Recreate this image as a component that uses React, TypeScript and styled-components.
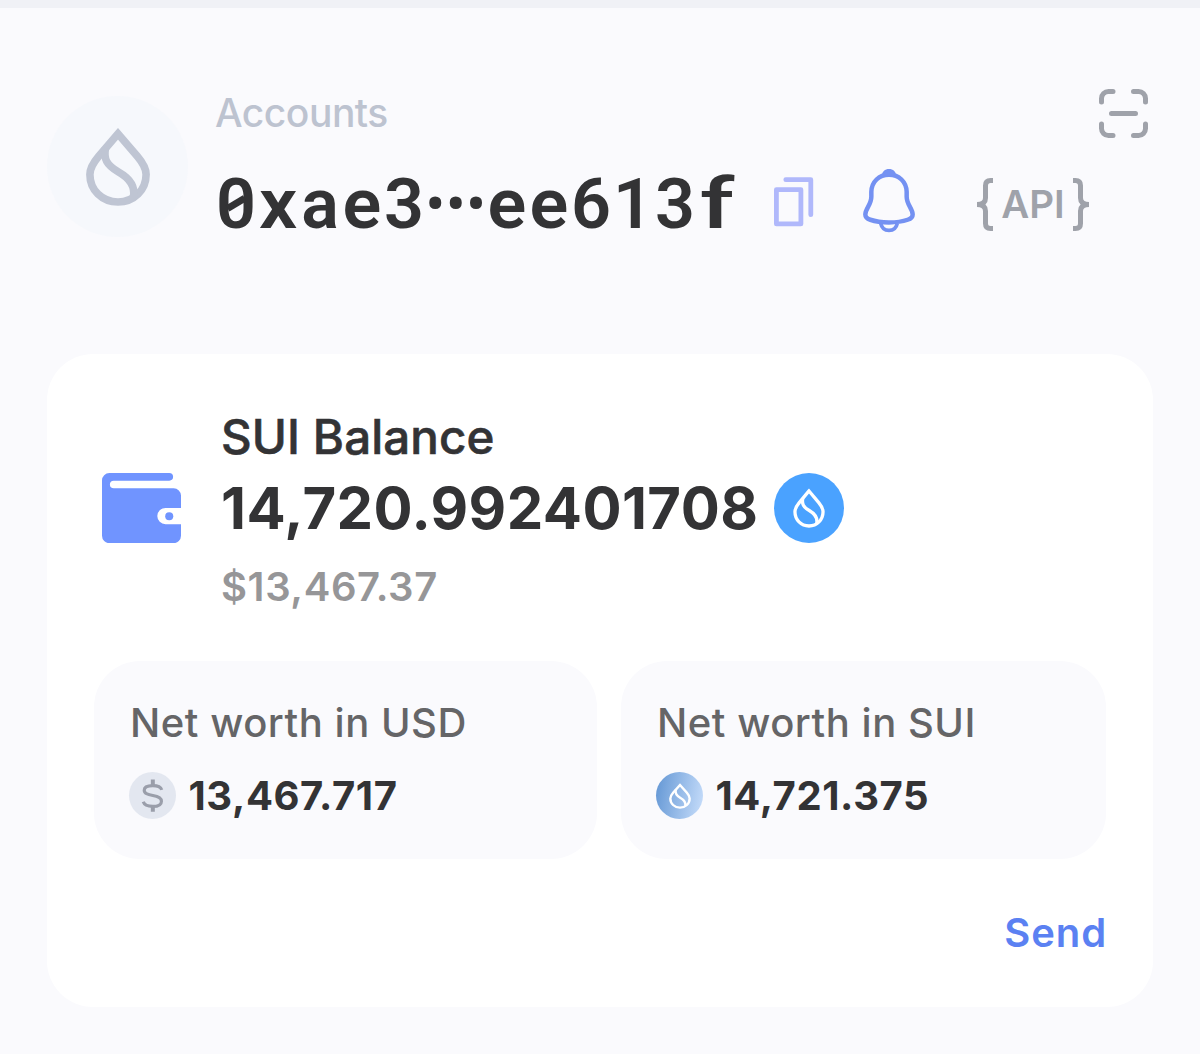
import React from "react";
import styled, { createGlobalStyle, ThemeProvider } from "styled-components";

const theme = {
  colors: {
    background: "#fafafd",
    strip: "#f0f1f6",
    card: "#ffffff",
    text: "#333335",
    label: "#656567",
    muted: "#969698",
    faded: "#bdc3d0",
    icon: "#9fa2aa",
    cta: "#5b81f2",
  },
};

const GlobalStyle = createGlobalStyle`
  * {
    box-sizing: border-box;
  }
  body {
    margin: 0;
    background: ${theme.colors.background};
    font-family: Inter, "Liberation Sans", sans-serif;
    font-optical-sizing: none;
    color: ${theme.colors.text};
  }
  svg {
    display: block;
    flex-shrink: 0;
  }
`;

const Page = styled.div`
  width: 1200px;
  height: 1054px;
  overflow: hidden;
  border-top: 8px solid ${({ theme }) => theme.colors.strip};
`;

const Header = styled.header`
  display: flex;
  height: 346px;
  padding: 80px 51px 0 47px;
`;

const Avatar = styled.div`
  width: 141px;
  height: 141px;
  margin-top: 8px;
  border-radius: 50%;
  background: #f6f8fc;
  display: flex;
  align-items: center;
  justify-content: center;
  flex-shrink: 0;
`;

const HeaderBody = styled.div`
  flex-grow: 1;
  margin-left: 27px;
`;

const HeaderTop = styled.div`
  display: flex;
  justify-content: space-between;
  height: 51px;
`;

const HeaderLabel = styled.span`
  font-size: 39px;
  font-weight: 500;
  line-height: 50px;
  letter-spacing: -0.5px;
  color: ${({ theme }) => theme.colors.faded};
`;

const AddressRow = styled.div`
  display: flex;
  align-items: center;
  height: 80px;
  margin-top: 25px;
`;

const Address = styled.h1`
  margin: 0;
  width: 523px;
  font-family: Roboto, sans-serif;
  font-size: 70px;
  font-weight: 600;
  line-height: 80px;
  white-space: nowrap;
  display: flex;
`;

const Glyph = styled.span<{ $stretch?: number; $weight?: number }>`
  display: inline-block;
  width: 42.2px;
  text-align: center;
  font-weight: ${({ $weight }) => $weight ?? 600};
  transform: scaleX(${({ $stretch }) => $stretch ?? 1});
`;

const SlashedZero = styled(Glyph)`
  position: relative;
  &::after {
    content: "";
    position: absolute;
    left: 11px;
    top: 36px;
    width: 20px;
    height: 6.5px;
    background: currentColor;
    transform: rotate(-31deg);
  }
`;

const Dot = styled.span`
  display: flex;
  justify-content: center;
  width: 20.4px;
  font-size: 53px;
`;

const HeaderIcons = styled.div`
  display: flex;
  align-items: center;
  margin-left: 36px;
`;

const CopyWrapper = styled.div`
  margin-top: -4px;
`;

const BellWrapper = styled.div`
  margin: -6px 0 0 49px;
`;

const ApiTag = styled.div`
  display: flex;
  align-items: center;
  justify-content: space-between;
  width: 112px;
  margin-left: 62px;
  font-size: 38.5px;
  font-weight: 600;
  line-height: 54px;
  color: ${({ theme }) => theme.colors.icon};
`;

const Card = styled.main`
  width: 1106px;
  height: 653px;
  margin-left: 47px;
  padding: 57.5px 47px 0;
  border-radius: 46px;
  background: ${({ theme }) => theme.colors.card};
`;

const Summary = styled.section`
  display: flex;
  align-items: center;
  height: 193px;
  padding-left: 8px;
`;

const SummaryText = styled.div`
  margin-left: 40px;
  padding-top: 7px;
`;

const SummaryTitle = styled.h2`
  margin: 0;
  font-size: 47.5px;
  font-weight: 500;
  line-height: 50px;
  letter-spacing: 0.1px;
  -webkit-text-stroke: 0.6px currentColor;
`;

const Balance = styled.div`
  display: flex;
  align-items: center;
  gap: 15.5px;
  height: 92px;
  font-size: 58px;
  font-weight: 700;
  letter-spacing: 0.43px;
`;

const Fiat = styled.div`
  font-size: 40px;
  font-weight: 600;
  line-height: 51px;
  letter-spacing: 0.6px;
  margin-top: 7px;
  color: ${({ theme }) => theme.colors.muted};
`;

const Tiles = styled.section`
  display: grid;
  grid-template-columns: 503px 485px;
  gap: 24px;
  margin-top: 56.5px;
`;

const Tile = styled.div`
  height: 198px;
  padding: 38px 35px 0;
  border-radius: 46px;
  background: ${({ theme }) => theme.colors.background};
`;

const TileLabel = styled.div`
  font-size: 40px;
  font-weight: 500;
  line-height: 48px;
  letter-spacing: 0.53px;
  text-indent: 1px;
  color: ${({ theme }) => theme.colors.label};
`;

const TileValue = styled.div`
  display: flex;
  align-items: center;
  gap: 12.5px;
  margin-top: 24px;
  font-size: 40px;
  font-weight: 700;
  line-height: 49px;
  letter-spacing: 0.6px;
`;

const Coin = styled.span<{ $size: number; $background: string }>`
  width: ${({ $size }) => $size}px;
  height: ${({ $size }) => $size}px;
  border-radius: 50%;
  background: ${({ $background }) => $background};
  display: flex;
  align-items: center;
  justify-content: center;
`;

const SendButton = styled.button`
  display: block;
  margin: 49px -1px 0 auto;
  padding: 0;
  border: 0;
  background: none;
  font-family: inherit;
  font-size: 40px;
  font-weight: 600;
  line-height: 50px;
  letter-spacing: 0.9px;
  color: ${({ theme }) => theme.colors.cta};
  cursor: pointer;
`;

interface DropProps {
  width: number;
  height: number;
  stroke: number;
  color: string;
}

function Drop({ width, height, stroke, color }: DropProps) {
  return (
    <svg width={width} height={height} viewBox="0 0 64 78" preserveAspectRatio="none" fill="none" stroke={color} strokeWidth={stroke}>
      <path d="M32 5.8 12.5 28.5C7 35 3.9 40 3.9 46.5 3.9 62 16 74 32 74s28.1-12 28.1-27.5C60.1 40 57 35 51.5 28.5Z" />
      <path d="M19.5 20C17.5 31 20.5 37 32.5 44 44 50.5 49.5 58 47.5 69" />
    </svg>
  );
}

function ScanIcon() {
  return (
    <svg width="51" height="51" viewBox="0 0 51 51" fill="none" stroke={theme.colors.icon} strokeWidth="5" strokeLinecap="round">
      <path d="M3.5 14V10.5a7 7 0 0 1 7-7H15M35.5 3.5H40.5a7 7 0 0 1 7 7V14M47.5 36V40.5a7 7 0 0 1-7 7H35.5M15 47.5H10.5a7 7 0 0 1-7-7V36M13.5 25.5h24" />
    </svg>
  );
}

function CopyIcon() {
  return (
    <svg width="40" height="50" viewBox="0 0 40 50" fill="none" stroke="#b0b8fb" strokeWidth="4.8" strokeLinejoin="round">
      <rect x="2.4" y="12.7" width="24.5" height="34.2" />
      <path d="M11.8 2.7h25v35" strokeLinecap="round" />
    </svg>
  );
}

function BellIcon() {
  return (
    <svg width="52" height="63.5" viewBox="0 0 156 190" fill="none" stroke="#7491f2" strokeWidth="13.5">
      <path d="M78 17C48 17 26 38 25 68V83C25 107 7 119 7 136 7 146 13 149 22 152 39 158 58 160 78 160S117 158 134 152C143 149 149 146 149 136 149 119 131 107 131 83V68C130 38 108 17 78 17Z" />
      <path d="M53 163C56 177 65 184 78 184S100 177 103 163" strokeWidth="11" />
      <path d="M57 20C57 7 66 0 78 0s21 7 21 20Z" fill="#7491f2" stroke="none" />
    </svg>
  );
}

function Brace({ flip }: { flip?: boolean }) {
  return (
    <svg width="16" height="53" viewBox="0 0 16 53" fill="none" stroke={theme.colors.icon} strokeWidth="5">
      <path
        transform={flip ? "matrix(-1 0 0 1 16 0)" : undefined}
        d="M16 2.5H13.5C10 2.5 8.5 4 8.5 7.5V20C8.5 24 6 26.5 0 26.5 6 26.5 8.5 29 8.5 33V45.5C8.5 49 10 50.5 13.5 50.5H16"
      />
    </svg>
  );
}

function WalletIcon() {
  return (
    <svg width="79" height="70.5" viewBox="0 0 235 212" preserveAspectRatio="none" fill="#7094ff">
      <path d="M22 0H200a11.5 11.5 0 0 1 0 23H35a11.5 11.5 0 0 0 0 23H213a22 22 0 0 1 22 22V105H189a24.5 24.5 0 0 0 0 49H235V189a22 22 0 0 1-22 22H22a22 22 0 0 1-22-22V22A22 22 0 0 1 22 0Z" />
      <circle cx="200" cy="130" r="12" />
    </svg>
  );
}

function DollarIcon() {
  return (
    <svg width="47" height="47" viewBox="0 0 142 142" fill="none" stroke="#9a9eaa" strokeWidth="9.5">
      <path d="M99 54C96 45 86 41 72 41 56 41 46 46 46 55 46 65 56 68 72 71 90 74 98 79 98 88 98 98 88 104 72 104 57 104 46 99 43 90" />
      <path d="M72 23V40M72 103V120" strokeWidth="12" />
    </svg>
  );
}

export default function App() {
  return (
    <ThemeProvider theme={theme}>
      <GlobalStyle />
      <Page>
        <Header>
          <Avatar>
            <Drop width={64} height={78} stroke={7.6} color="#bfc5d3" />
          </Avatar>
          <HeaderBody>
            <HeaderTop>
              <HeaderLabel>Accounts</HeaderLabel>
              <ScanIcon />
            </HeaderTop>
            <AddressRow>
              <Address>
                <SlashedZero>0</SlashedZero>
                <Glyph $stretch={1.08}>x</Glyph>
                <Glyph>a</Glyph>
                <Glyph $stretch={1.03}>e</Glyph>
                <Glyph>3</Glyph>
                <Dot>•</Dot>
                <Dot>•</Dot>
                <Dot>•</Dot>
                <Glyph $stretch={1.03}>e</Glyph>
                <Glyph $stretch={1.03}>e</Glyph>
                <Glyph>6</Glyph>
                <Glyph>1</Glyph>
                <Glyph>3</Glyph>
                <Glyph $stretch={1.4} $weight={500}>f</Glyph>
              </Address>
              <HeaderIcons>
                <CopyWrapper>
                  <CopyIcon />
                </CopyWrapper>
                <BellWrapper>
                  <BellIcon />
                </BellWrapper>
                <ApiTag>
                  <Brace />
                  API
                  <Brace flip />
                </ApiTag>
              </HeaderIcons>
            </AddressRow>
          </HeaderBody>
        </Header>
        <Card>
          <Summary>
            <WalletIcon />
            <SummaryText>
              <SummaryTitle>SUI Balance</SummaryTitle>
              <Balance>
                14,720.992401708
                <Coin $size={70} $background="#4aa2ff">
                  <Drop width={32} height={40} stroke={6.6} color="#ffffff" />
                </Coin>
              </Balance>
              <Fiat>$13,467.37</Fiat>
            </SummaryText>
          </Summary>
          <Tiles>
            <Tile>
              <TileLabel>Net worth in USD</TileLabel>
              <TileValue>
                <Coin $size={47} $background="#e3e7f0">
                  <DollarIcon />
                </Coin>
                13,467.717
              </TileValue>
            </Tile>
            <Tile>
              <TileLabel>Net worth in SUI</TileLabel>
              <TileValue>
                <Coin $size={47} $background="linear-gradient(100deg, #6296d4, #c8defb)">
                  <Drop width={22} height={26} stroke={7} color="#ffffff" />
                </Coin>
                14,721.375
              </TileValue>
            </Tile>
          </Tiles>
          <SendButton>Send</SendButton>
        </Card>
      </Page>
    </ThemeProvider>
  );
}
